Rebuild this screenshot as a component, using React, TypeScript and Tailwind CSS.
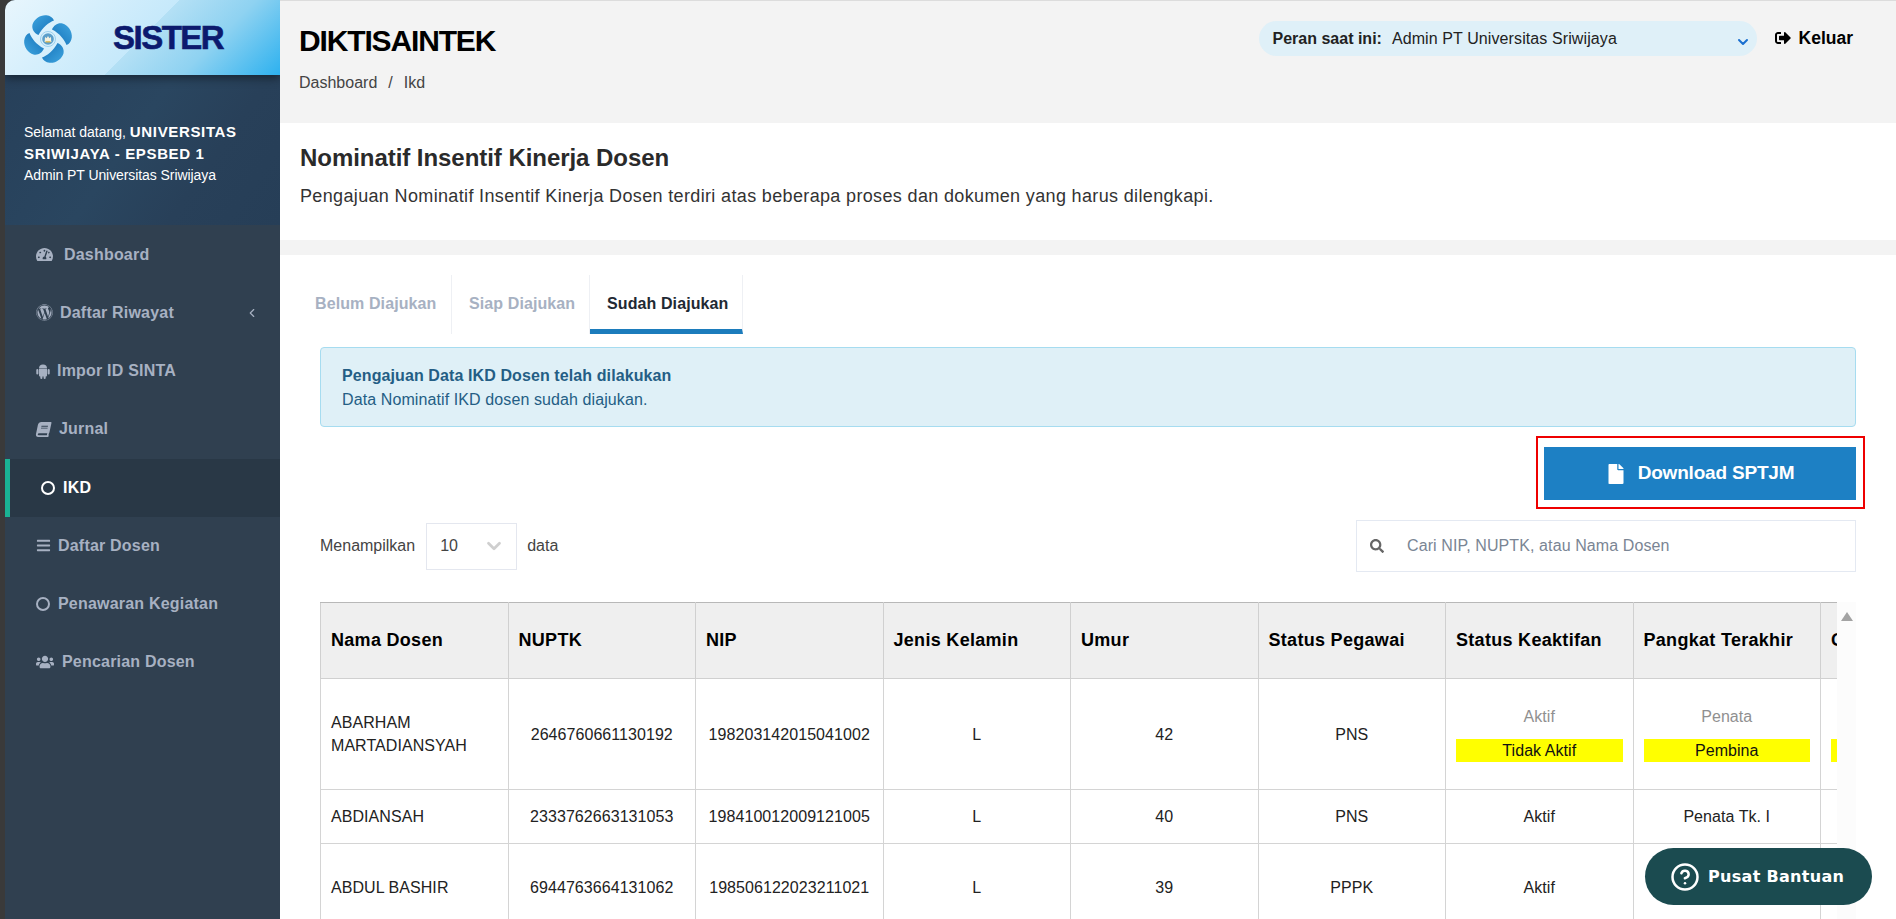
import { FaBars, FaBook, FaFile, FaSearch, FaSignOutAlt, FaTachometerAlt, FaUsers, FaWordpress } from "react-icons/fa";
import { ChevronDown, ChevronLeft, CircleHelp } from "lucide-react";

function AndroidIcon() {
  return (
    <svg viewBox="0 0 14 16" className="mr-[7px] h-[16px] w-[14px]" fill="currentColor">
      <path d="M3 5.500a4 4 0 0 1 8 0z" />
      <path d="M3 6h8v6.500a1 1 0 0 1-1 1H4a1 1 0 0 1-1-1z" />
      <rect x="0.300" y="6" width="2.100" height="5.500" rx="1" />
      <rect x="11.600" y="6" width="2.100" height="5.500" rx="1" />
      <rect x="4.300" y="12" width="2.100" height="4" rx="1" />
      <rect x="7.600" y="12" width="2.100" height="4" rx="1" />
    </svg>
  );
}

const menu = [
  { label: "Dashboard", icon: <FaTachometerAlt className="mr-[11px] h-[17px] w-[17px]" /> },
  { label: "Daftar Riwayat", icon: <FaWordpress className="mr-[7px] h-[17px] w-[17px]" />, caret: true },
  { label: "Impor ID SINTA", icon: <AndroidIcon /> },
  { label: "Jurnal", icon: <FaBook className="mr-[8px] h-[15px] w-[15px] -skew-x-12" /> },
  { label: "IKD", icon: <span className="ml-[5px] mr-[8px] h-[14px] w-[14px] rounded-full border-[2.5px] border-white" />, active: true },
  { label: "Daftar Dosen", icon: <FaBars className="mr-[7px] h-[15px] w-[15px]" /> },
  { label: "Penawaran Kegiatan", icon: <span className="mr-[8px] h-[14px] w-[14px] rounded-full border-[2px] border-[#a7b1c2]" /> },
  { label: "Pencarian Dosen", icon: <FaUsers className="mr-[8px] h-[18px] w-[18px]" /> },
];

const headers = ["Nama Dosen", "NUPTK", "NIP", "Jenis Kelamin", "Umur", "Status Pegawai", "Status Keaktifan", "Pangkat Terakhir", "Golongan"];

const rows = [
  {
    h: "h-[111px]",
    nama: "ABARHAM MARTADIANSYAH",
    nuptk: "2646760661130192",
    nip: "198203142015041002",
    jk: "L",
    umur: "42",
    status: "PNS",
    aktif: ["Aktif", "Tidak Aktif"],
    pangkat: ["Penata", "Pembina"],
    gol: ["III/c", "IV/a"],
  },
  {
    h: "h-[54px]",
    nama: "ABDIANSAH",
    nuptk: "2333762663131053",
    nip: "198410012009121005",
    jk: "L",
    umur: "40",
    status: "PNS",
    aktif: ["Aktif"],
    pangkat: ["Penata Tk. I"],
    gol: ["III/d"],
  },
  {
    h: "h-[88px]",
    nama: "ABDUL BASHIR",
    nuptk: "6944763664131062",
    nip: "198506122023211021",
    jk: "L",
    umur: "39",
    status: "PPPK",
    aktif: ["Aktif"],
    pangkat: ["Penata"],
    gol: ["III/c"],
  },
];

function Logo() {
  const petal = "M22.500 29C18 27 15.500 23 16.500 18.500C18 13 24.500 8.500 30.500 9.200C34 9.700 37 11.500 38 14.500C33 16.500 26.500 21 22.500 29Z";
  return (
    <svg viewBox="0 0 64 64" className="h-[64px] w-[64px] shrink-0">
      <defs>
        <linearGradient id="petal" x1="0" y1="0" x2="1" y2="1">
          <stop offset="0" stopColor="#3fa5df" />
          <stop offset="1" stopColor="#1470b8" />
        </linearGradient>
      </defs>
      {[0, 90, 180, 270].map((r) => (
        <path key={r} d={petal} fill="url(#petal)" transform={`rotate(${r} 32 33)`} />
      ))}
      <circle cx="32" cy="33" r="7.500" fill="none" stroke="#8cc8ea" strokeWidth="0.800" />
      <circle cx="32" cy="33" r="5.800" fill="#5c9fca" />
      <path d="M28.500 36c.8-3.500 0-4 .8-5l1.300 1.200L32 30l1.400 2.200 1.300-1.200c.8 1 0 1.500.8 5z" fill="#f4f1df" />
      <rect x="29.500" y="35.200" width="5" height="1.300" fill="#d8b24a" />
    </svg>
  );
}

function Sidebar() {
  return (
    <aside className="flex h-full w-[280px] shrink-0 bg-[#3a3a3a] pl-[5px]">
      <div className="flex h-full w-full flex-col overflow-hidden rounded-tl-[10px] bg-[#304050]">
        <div className="relative z-10 flex h-[75px] shrink-0 items-center bg-[linear-gradient(135deg,#e8f6fd_0%,#c6e9fb_50%,#b4e0f5_50%,#8ed2f1_72%,#2db1ef_100%)] pl-[11px] shadow-[0_3px_9px_rgba(0,0,0,0.45)]">
          <Logo />
          <span className="ml-[33px] text-[33px] font-bold leading-none tracking-[-1.5px] text-[#0c1a6e] [-webkit-text-stroke:0.6px_#0c1a6e]">SISTER</span>
        </div>
        <div className="h-[150px] shrink-0 bg-[linear-gradient(125deg,#27405a_0%,#2a4660_45%,#284059_70%,#263e57_100%)] pl-[19px] pt-[46px] text-white">
          <p className="text-[14px] leading-[22px]">
            Selamat datang, <b className="text-[15px] tracking-[0.65px]">UNIVERSITAS SRIWIJAYA - EPSBED 1</b>
          </p>
          <p className="text-[14px] leading-[20px] tracking-[-0.08px]">Admin PT Universitas Sriwijaya</p>
        </div>
        <nav className="pt-[0.5px]">
          {menu.map((m) => (
            <div
              key={m.label}
              className={
                m.active
                  ? "flex h-[58.25px] items-center border-l-[5px] border-[#1ab394] bg-[#293846] pl-[26px] text-white"
                  : "flex h-[58.25px] items-center pl-[31px] text-[#a7b1c2]"
              }
            >
              {m.icon}
              <span className="text-[16px] font-bold tracking-[0.2px]">{m.label}</span>
              {m.caret && <ChevronLeft className="ml-auto mr-[21px] h-[14px] w-[14px]" />}
            </div>
          ))}
        </nav>
      </div>
    </aside>
  );
}

function Header() {
  return (
    <header className="flex h-[123px] shrink-0 items-start justify-between border-t border-[#dcdcdc] bg-[#f3f3f3] pl-[19px] pr-[43px]">
      <div>
        <h1 className="mt-[23px] text-[30px] font-bold leading-[34px] tracking-[-1.15px] text-black">DIKTISAINTEK</h1>
        <div className="mt-[16px] flex text-[16px] leading-[18px] text-[#444]">
          <span>Dashboard</span>
          <span className="mx-[11px]">/</span>
          <span>Ikd</span>
        </div>
      </div>
      <div className="flex items-start">
        <div className="mt-[20px] flex h-[35px] w-[498px] items-center rounded-full bg-[#dff0f8] pl-[14px] text-[16px] text-[#222]">
          <b>Peran saat ini:</b>
          <span className="ml-[10px] tracking-[0.1px]">Admin PT Universitas Sriwijaya</span>
          <ChevronDown strokeWidth={3} className="ml-auto mr-[6px] mt-[6px] h-[16px] w-[16px] text-[#1a6fd0]" />
        </div>
        <div className="ml-[18px] mt-[27px] flex items-center text-[17.5px] font-bold leading-[20px] text-black">
          <FaSignOutAlt className="mr-[8px] h-[16px] w-[16px]" />
          Keluar
        </div>
      </div>
    </header>
  );
}

function Tabs() {
  return (
    <div className="flex h-[59px] whitespace-nowrap text-[16px] font-bold tracking-[0.1px]">
      <div className="w-[132px] border-r border-[#eef0f4] pt-[17px] text-[#a7b1c2]">
        <span className="-ml-[5px]">Belum Diajukan</span>
      </div>
      <div className="w-[138px] border-r border-[#eef0f4] pl-[17px] pt-[17px] text-[#a7b1c2]">Siap Diajukan</div>
      <div className="w-[153px] border-b-[5px] border-r border-b-[#1c7cbc] border-r-[#eef0f4] pl-[17px] pt-[17px] text-[#1f2933]">Sudah Diajukan</div>
    </div>
  );
}

function Cell({ lines }: { lines: string[] }) {
  if (lines.length === 1) return <span>{lines[0]}</span>;
  return (
    <div className="pb-[2px]">
      <div className="leading-[23px] text-[#909090]">{lines[0]}</div>
      <div className="mt-[11px] bg-[#ffff00] leading-[23px] text-[#111]">{lines[1]}</div>
    </div>
  );
}

function DataTable() {
  const td = "border border-[#d4d4d4] px-[10px] text-center text-[16px] leading-[23px] tracking-[0.06px] text-[#222]";
  return (
    <div className="mt-[30px] flex">
      <div className="w-[1517px] overflow-hidden">
        <table className="w-[1688px] table-fixed border-collapse">
          <thead>
            <tr className="h-[76px] bg-[#efefef]">
              {headers.map((h) => (
                <th key={h} className="w-[187.5px] border border-[#d0d0d0] border-t-[#b8b8b8] px-[10px] text-left text-[18px] font-bold tracking-[0.3px] text-black">
                  {h}
                </th>
              ))}
            </tr>
          </thead>
          <tbody>
            {rows.map((r) => (
              <tr key={r.nama} className={r.h}>
                <td className={`${td} !text-left`}>{r.nama}</td>
                <td className={td}>{r.nuptk}</td>
                <td className={td}>{r.nip}</td>
                <td className={td}>{r.jk}</td>
                <td className={td}>{r.umur}</td>
                <td className={td}>{r.status}</td>
                <td className={td}><Cell lines={r.aktif} /></td>
                <td className={td}><Cell lines={r.pangkat} /></td>
                <td className={td}><Cell lines={r.gol} /></td>
              </tr>
            ))}
          </tbody>
        </table>
      </div>
      <div className="flex w-[19px] justify-center bg-[#fcfcfc] pt-[10px]">
        <div className="h-0 w-0 border-x-[6px] border-b-[9px] border-x-transparent border-b-[#a3a3a3]" />
      </div>
    </div>
  );
}

export default function App() {
  return (
    <div className="relative flex h-[919px] w-[1896px] overflow-hidden bg-white font-['Liberation_Sans',Arial,sans-serif]">
      <Sidebar />
      <main className="flex min-w-0 flex-1 flex-col bg-[#f3f3f3]">
        <Header />
        <section className="h-[117px] shrink-0 bg-white px-[20px] pt-[22px]">
          <h2 className="text-[24px] font-bold leading-[26px] tracking-[-0.05px] text-[#2a2a2a]">Nominatif Insentif Kinerja Dosen</h2>
          <p className="mt-[13px] text-[18px] leading-[24px] tracking-[0.35px] text-[#333]">
            Pengajuan Nominatif Insentif Kinerja Dosen terdiri atas beberapa proses dan dokumen yang harus dilengkapi.
          </p>
        </section>
        <section className="mt-[15px] flex-1 overflow-hidden bg-white px-[40px] pt-[20px]">
          <Tabs />
          <div className="mt-[13px] h-[80px] rounded-[4px] border border-[#a6dcf0] bg-[#dff0f7] pl-[21px] pt-[17px] text-[16px] tracking-[0.1px] text-[#245e85]">
            <p className="font-bold leading-[22px]">Pengajuan Data IKD Dosen telah dilakukan</p>
            <p className="leading-[26px]">Data Nominatif IKD dosen sudah diajukan.</p>
          </div>
          <div className="mt-[20px] flex justify-end">
            <div className="relative">
              <button className="flex h-[53px] w-[312px] items-center justify-center bg-[#1d80c4] text-[19px] font-bold tracking-[-0.2px] text-white">
                <FaFile className="mr-[12px] h-[20px] w-[20px]" />
                Download SPTJM
              </button>
              <div className="absolute -bottom-[9px] -left-[8px] -right-[9px] -top-[11px] border-2 border-[#ee0000]" />
            </div>
          </div>
          <div className="mt-[20px] flex h-[52px] items-center justify-between text-[16px] text-[#444]">
            <div className="flex items-center">
              <span>Menampilkan</span>
              <div className="ml-[11px] flex h-[47px] w-[91px] items-center border border-[#e4e7ef] pl-[13px] pr-[11px]">
                <span className="text-[16px]">10</span>
                <ChevronDown strokeWidth={3} className="ml-auto h-[22px] w-[22px] text-[#cfcfcf]" />
              </div>
              <span className="ml-[10px]">data</span>
            </div>
            <div className="flex h-[52px] w-[500px] items-center border border-[#e4e9f2] pl-[13px]">
              <FaSearch className="h-[14px] w-[14px] text-[#666]" />
              <span className="ml-[23px] tracking-[0.1px] text-[#7a8594]">Cari NIP, NUPTK, atau Nama Dosen</span>
            </div>
          </div>
          <DataTable />
        </section>
      </main>
      <div className="absolute left-[1645px] top-[848px] flex h-[57px] w-[227px] items-center rounded-full bg-[#1b4b50] pl-[25px] text-white">
        <CircleHelp className="h-[30px] w-[30px]" strokeWidth={2} />
        <span className="ml-[8px] font-['DejaVu_Sans',sans-serif] text-[16px] font-bold tracking-[0.3px]">Pusat Bantuan</span>
      </div>
    </div>
  );
}
